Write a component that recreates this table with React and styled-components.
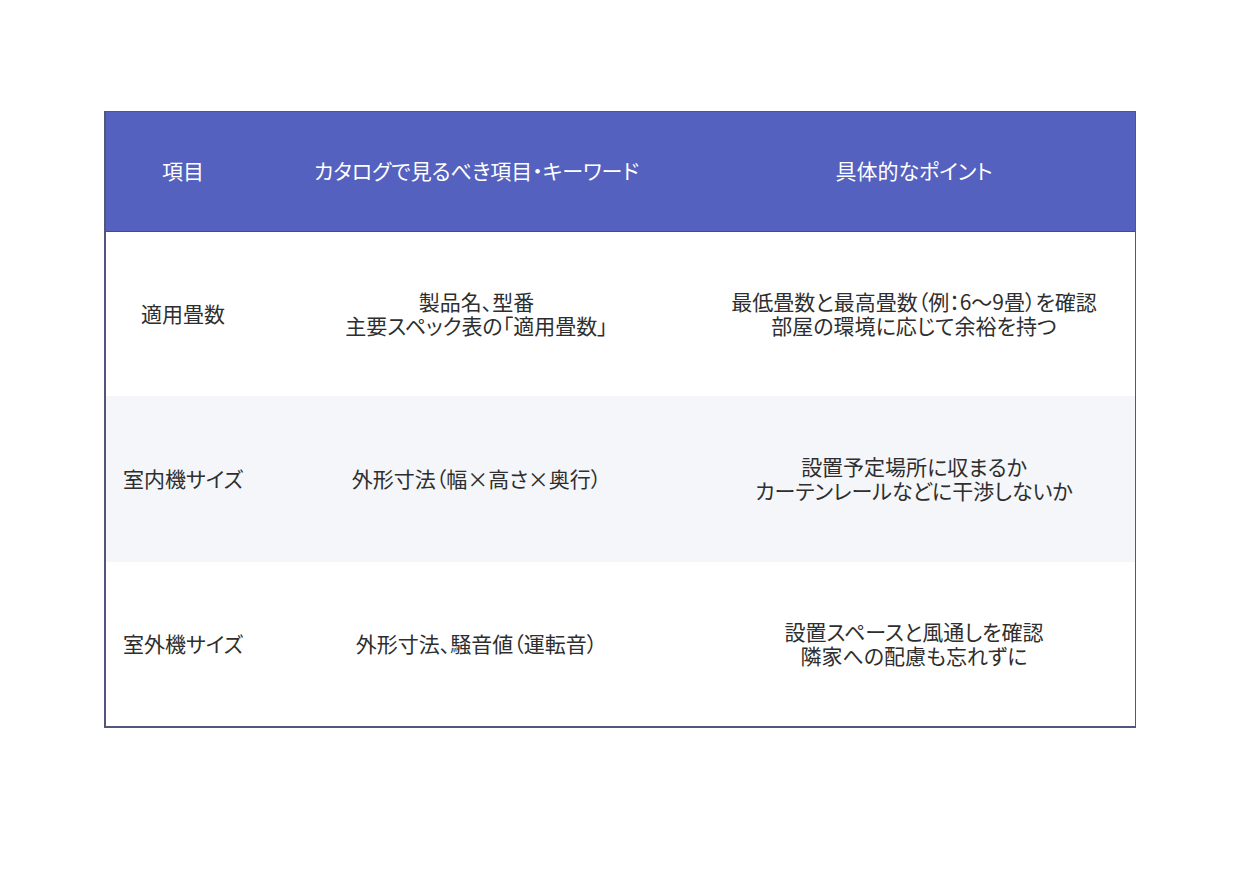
import React from "react";
import styled, { createGlobalStyle } from "styled-components";

const Global = createGlobalStyle`
  html, body { margin: 0; padding: 0; background: #ffffff; }
  body { font-family: "Noto Sans CJK JP", "Noto Sans", sans-serif; }
`;

const Page = styled.div`
  width: 1240px;
  height: 875px;
  box-sizing: border-box;
  padding: 111px 0 0 104px;
`;

const Table = styled.div`
  width: 1032px;
  box-sizing: border-box;
  border: 1px solid #525779;
  border-left-width: 2px;
  border-bottom-width: 2px;
  display: grid;
  grid-template-columns: 154px 433px 1fr;
  font-feature-settings: "palt" 1;
`;

const HeadCell = styled.div`
  height: 120px;
  padding-bottom: 3px;
  box-sizing: border-box;
  background: #5461bf;
  border-bottom: 1px solid #3f4a9c;
  color: #ffffff;
  font-size: 21px;
  line-height: 24px;
  display: flex;
  align-items: center;
  justify-content: center;
  text-align: center;
`;

const Cell = styled.div`
  height: ${(p) => p.$h}px;
  padding-bottom: 2px;
  box-sizing: border-box;
  background: ${(p) => (p.$alt ? "#f4f6f9" : "#ffffff")};
  color: #2e2e2e;
  font-size: 21px;
  line-height: 24px;
  display: flex;
  align-items: center;
  justify-content: center;
  text-align: center;
  white-space: pre-line;
`;

const headers = ["項目", "カタログで見るべき項目・キーワード", "具体的なポイント"];

const rows = [
  {
    h: 164,
    cells: [
      "適用畳数",
      "製品名、型番\n主要スペック表の「適用畳数」",
      "最低畳数と最高畳数（例：6〜9畳）を確認\n部屋の環境に応じて余裕を持つ",
    ],
  },
  {
    h: 166,
    alt: true,
    cells: [
      "室内機サイズ",
      "外形寸法（幅×高さ×奥行）",
      "設置予定場所に収まるか\nカーテンレールなどに干渉しないか",
    ],
  },
  {
    h: 164,
    cells: [
      "室外機サイズ",
      "外形寸法、騒音値（運転音）",
      "設置スペースと風通しを確認\n隣家への配慮も忘れずに",
    ],
  },
];

export default function App() {
  return (
    <>
      <Global />
      <Page>
        <Table>
          {headers.map((h) => (
            <HeadCell key={h}>{h}</HeadCell>
          ))}
          {rows.map((r, i) =>
            r.cells.map((c, j) => (
              <Cell key={`${i}-${j}`} $h={r.h} $alt={r.alt}>
                {c}
              </Cell>
            ))
          )}
        </Table>
      </Page>
    </>
  );
}
